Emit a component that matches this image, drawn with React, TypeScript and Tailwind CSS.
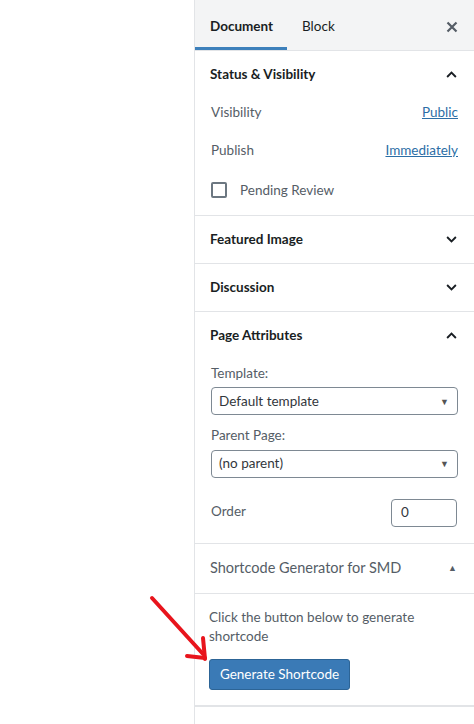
import React from 'react';

const ChevronUp = () => (
  <svg width="15" height="15" viewBox="0 0 24 24" className="text-[#191e23]">
    <path d="M5 16 L12 9 L19 16" fill="none" stroke="currentColor" strokeWidth="3" />
  </svg>
);

const ChevronDown = () => (
  <svg width="15" height="15" viewBox="0 0 24 24" className="text-[#191e23]">
    <path d="M5 8 L12 15 L19 8" fill="none" stroke="currentColor" strokeWidth="3" />
  </svg>
);

const PanelHeader: React.FC<{ title: string; open?: boolean }> = ({ title, open }) => (
  <div className="h-[47px] flex items-center justify-between pl-[15px] pr-[15px]">
    <span className="text-[13.5px] font-bold text-[#191e23]">{title}</span>
    {open ? <ChevronUp /> : <ChevronDown />}
  </div>
);

const Select: React.FC<{ value: string }> = ({ value }) => (
  <div className="h-[28px] w-[247px] border border-[#7e8993] rounded-[4px] flex items-center justify-between pl-[7px] pr-[8px] text-[13.5px] text-[#32373c]">
    <span>{value}</span>
    <span className="text-[9px] text-[#555]">▼</span>
  </div>
);

export default function App() {
  return (
    <div className="w-[474px] h-[724px] flex bg-white overflow-hidden relative" style={{ fontFamily: 'Lato, "Noto Sans", sans-serif' }}>
      <div className="w-[194px] shrink-0 bg-white" />
      <div className="flex-1 border-l border-[#e2e4e7] flex flex-col">
        {/* Tabs */}
        <div className="h-[51px] bg-[#f3f4f5] border-b border-[#e2e4e7] flex items-stretch">
          <div className="w-[92px] relative flex items-center pt-[3px] pl-[15px] text-[13.5px] font-bold text-[#191e23]">
            Document
            <div className="absolute left-0 right-0 bottom-0 h-[3px] bg-[#3d80bb]" />
          </div>
          <div className="flex items-center pt-[3px] pl-[15px] text-[13.5px] text-[#191e23]">Block</div>
          <div className="flex-1" />
          <div className="flex items-center pt-[3px] pr-[16px]">
            <svg width="12" height="12" viewBox="0 0 12 12">
              <path d="M1.5 1.5 L10.5 10.5 M10.5 1.5 L1.5 10.5" stroke="#555d66" strokeWidth="2.2" />
            </svg>
          </div>
        </div>

        {/* Status & Visibility */}
        <div className="border-b border-[#e2e4e7] pb-[4px]">
          <PanelHeader title="Status & Visibility" open />
          <div className="px-[16px] text-[13.5px] text-[#555d66]">
            <div className="h-[38px] flex items-center justify-between -mt-[5px]">
              <span>Visibility</span>
              <span className="text-[#2c6ea6] underline">Public</span>
            </div>
            <div className="h-[38px] flex items-center justify-between">
              <span>Publish</span>
              <span className="text-[#2c6ea6] underline">Immediately</span>
            </div>
            <div className="h-[42px] flex items-center gap-[13px]">
              <div className="w-[16px] h-[16px] border-2 border-[#6c7781] rounded-[2px]" />
              <span>Pending Review</span>
            </div>
          </div>
        </div>

        <div className="border-b border-[#e2e4e7]">
          <PanelHeader title="Featured Image" />
        </div>
        <div className="border-b border-[#e2e4e7]">
          <PanelHeader title="Discussion" />
        </div>

        {/* Page Attributes */}
        <div className="border-b border-[#e2e4e7] pb-[16px]">
          <PanelHeader title="Page Attributes" open />
          <div className="px-[16px] text-[13.5px] text-[#555d66]">
            <div className="mt-[4px] mb-[4px]">Template:</div>
            <Select value="Default template" />
            <div className="mt-[10px] mb-[4px]">Parent Page:</div>
            <Select value="(no parent)" />
            <div className="mt-[21px] flex items-center justify-between pr-[1px]">
              <span className="-mt-[2px]">Order</span>
              <div className="w-[66px] h-[28px] border border-[#7e8993] rounded-[4px] flex items-center pl-[9px] text-[13.5px] text-[#32373c]">0</div>
            </div>
          </div>
        </div>

        {/* Shortcode Generator */}
        <div className="border-b-2 border-[#e2e4e7]">
          <div className="h-[50px] border-b border-[#e2e4e7] flex items-center justify-between pl-[15px] pr-[17px]">
            <span className="text-[14.5px] text-[#555d66]">Shortcode Generator for SMD</span>
            <span className="text-[9px] text-[#555d66]">▲</span>
          </div>
          <div className="px-[14px] pt-[14px] pb-[15px] text-[13.5px] text-[#555d66]">
            <p className="leading-[19px]">Click the button below to generate<br />shortcode</p>
            <button className="mt-[13px] h-[31px] w-[141px] bg-[#3a7ab6] border border-[#2c6496] rounded-[3px] text-white text-[13.5px]">
              Generate Shortcode
            </button>
          </div>
        </div>
        <div className="flex-1" />
      </div>

      {/* Red annotation arrow */}
      <svg className="absolute left-0 top-0 pointer-events-none" width="474" height="724">
        <g stroke="#e8141c" strokeWidth="4" strokeLinecap="round" fill="none">
          <path d="M152 598 L203 654" />
          <path d="M203 638 L205 659" />
          <path d="M187 656 L205 658" />
        </g>
      </svg>
    </div>
  );
}
